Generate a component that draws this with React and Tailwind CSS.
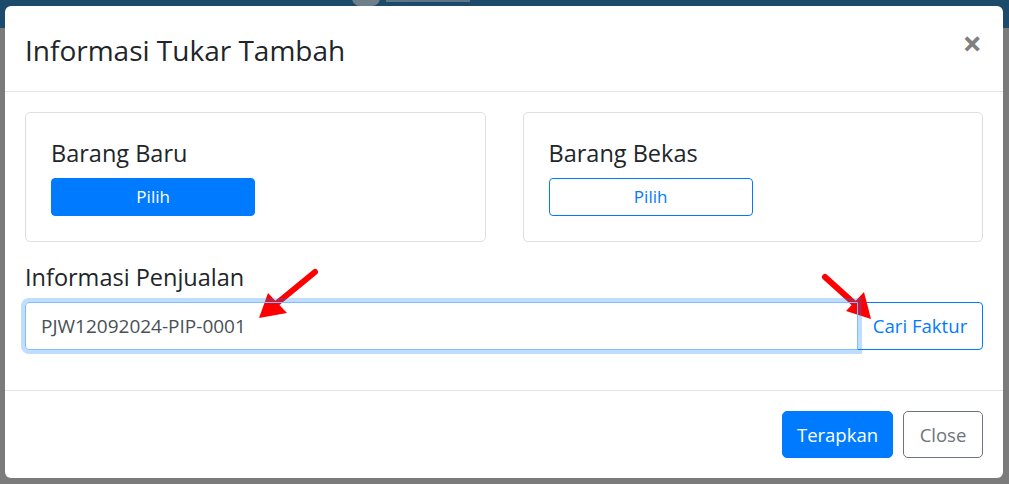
import React from 'react';

const Arrows = () => (
  <svg className="pointer-events-none absolute left-0 top-0" width="1009" height="484" viewBox="0 0 1009 484">
    {/* arrow to the invoice number */}
    <line x1="315" y1="272" x2="276" y2="304" stroke="#f00" strokeWidth="6" strokeLinecap="round" />
    <polygon points="259,318 268,293 287,313" fill="#f00" />
    {/* arrow to Cari Faktur */}
    <line x1="825" y1="277" x2="856" y2="305" stroke="#f00" strokeWidth="6" strokeLinecap="round" />
    <polygon points="871,319 846,311 864,292" fill="#f00" />
  </svg>
);

const ItemCard = ({ title, primary }) => (
  <div className="rounded-[5px] border border-[#dfdfdf] p-[25px]">
    <h5 className="mb-[10px] text-[23.5px] font-medium leading-[30px] text-[#212529]">{title}</h5>
    <button
      className={
        primary
          ? 'h-[38px] w-1/2 rounded-[4px] border border-[#007bff] bg-[#007bff] text-[17px] text-white'
          : 'h-[38px] w-1/2 rounded-[4px] border border-[#007bff] bg-white text-[17px] text-[#007bff]'
      }
    >
      Pilih
    </button>
  </div>
);

export default function App() {
  return (
    <div className="relative h-[484px] w-[1009px] overflow-hidden bg-[#7b7b7b] font-['Open_Sans','Noto_Sans',sans-serif]">
      {/* page behind the backdrop */}
      <div className="flex h-[28px] items-start bg-[#1c4a6b] pl-[352px]">
        <div className="mt-[-10px] h-[16px] w-[28px] rounded-full bg-[#6f7f8a]" />
        <div className="ml-[6px] mt-[-6px] h-[8px] w-[84px] bg-[#5f7585]" />
      </div>

      {/* modal */}
      <div className="absolute left-[5px] top-[6px] w-[998px] rounded-[6px] bg-white">
        <div className="flex h-[86px] items-start justify-between border-b border-[#e5e5e5] px-5 pt-5">
          <h4 className="mt-[2px] text-[28px] font-medium leading-[45px] text-[#212529]">Informasi Tukar Tambah</h4>
          <button className="mr-[1px] mt-[-5px] text-[34px] font-bold leading-[45px] text-[#808080]">×</button>
        </div>

        <div className="p-5">
          <div className="mb-5 grid grid-cols-2 gap-[37px]">
            <ItemCard title="Barang Baru" primary />
            <ItemCard title="Barang Bekas" />
          </div>

          <h5 className="mb-[10px] text-[23.5px] font-medium leading-[30px] text-[#212529]">Informasi Penjualan</h5>
          <div className="mb-5 flex h-[48px]">
            <div className="relative z-10 flex flex-1 items-center rounded-l-[4px] border border-[#80bdff] px-[15px] text-[19px] text-[#495057] shadow-[0_0_0_4px_rgba(0,123,255,0.25)]">
              PJW12092024-PIP-0001
            </div>
            <button className="-ml-px w-[126px] rounded-r-[4px] border border-[#007bff] bg-white text-[18.6px] text-[#007bff]">
              Cari Faktur
            </button>
          </div>
        </div>

        <div className="flex justify-end gap-[10px] border-t border-[#e5e5e5] px-5 pb-5 pt-5">
          <button className="h-[47px] w-[111px] rounded-[5px] border border-[#007bff] bg-[#007bff] text-[18.5px] text-white">
            Terapkan
          </button>
          <button className="h-[47px] w-[80px] rounded-[5px] border border-[#6c757d] bg-white text-[18.5px] text-[#6c757d]">
            Close
          </button>
        </div>
      </div>

      <Arrows />
    </div>
  );
}
